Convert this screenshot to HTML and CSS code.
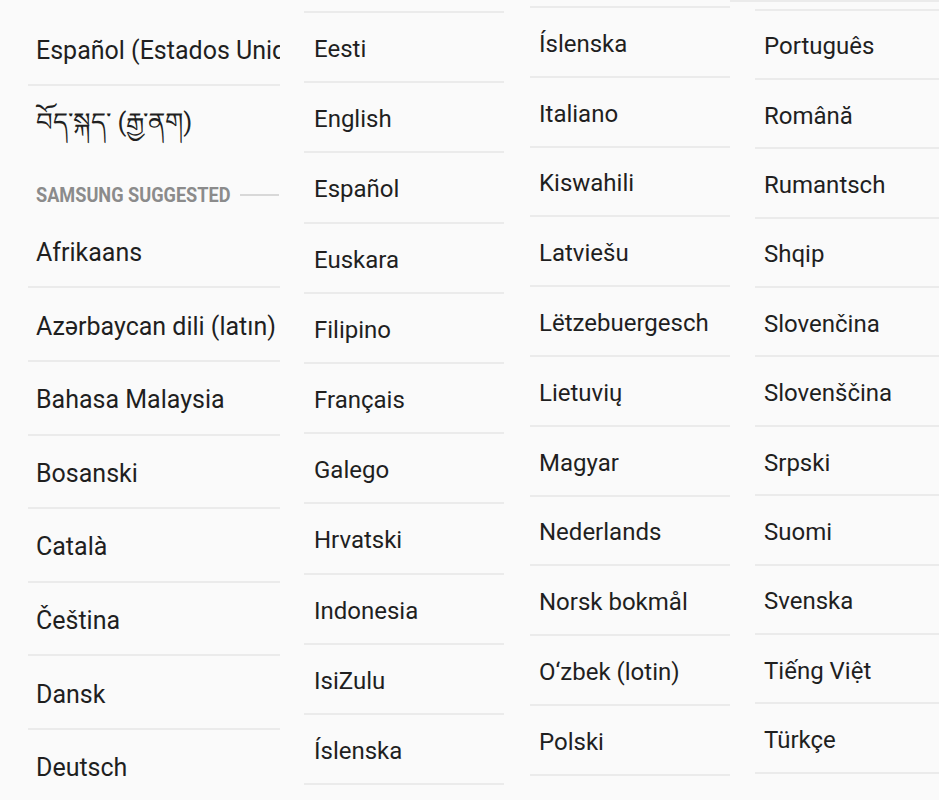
FILE: index.html
```html
<!DOCTYPE html>
<html lang="en">
<head>
<meta charset="utf-8">
<title>Languages</title>
<link rel="stylesheet" href="styles.css">
</head>
<body>
<main class="page">
  <section class="col col1">
    <div class="row line"><span class="clip">Español (Estados Unidos)</span></div>
    <div class="row tib">བོད་སྐད་ (རྒྱ་ནག)</div>
    <div class="header"><span class="header-text">SAMSUNG SUGGESTED</span><span class="header-rule"></span></div>
    <div class="row line">Afrikaans</div>
    <div class="row line">Azərbaycan dili (latın)</div>
    <div class="row line">Bahasa Malaysia</div>
    <div class="row line">Bosanski</div>
    <div class="row line">Català</div>
    <div class="row line">Čeština</div>
    <div class="row line">Dansk</div>
    <div class="row line">Deutsch</div>
  </section>
  <section class="col col2">
    <div class="row line">Eesti</div>
    <div class="row line">English</div>
    <div class="row line">Español</div>
    <div class="row line">Euskara</div>
    <div class="row line">Filipino</div>
    <div class="row line">Français</div>
    <div class="row line">Galego</div>
    <div class="row line">Hrvatski</div>
    <div class="row line">Indonesia</div>
    <div class="row line">IsiZulu</div>
    <div class="row line">Íslenska</div>
  </section>
  <section class="col col3">
    <div class="row line">Íslenska</div>
    <div class="row line">Italiano</div>
    <div class="row line">Kiswahili</div>
    <div class="row line">Latviešu</div>
    <div class="row line">Lëtzebuergesch</div>
    <div class="row line">Lietuvių</div>
    <div class="row line">Magyar</div>
    <div class="row line">Nederlands</div>
    <div class="row line">Norsk bokmål</div>
    <div class="row line">O‘zbek (lotin)</div>
    <div class="row line">Polski</div>
  </section>
  <section class="col4-wrap">
    <div class="col col4">
      <div class="row line">Português</div>
      <div class="row line">Română</div>
      <div class="row line">Rumantsch</div>
      <div class="row line">Shqip</div>
      <div class="row line">Slovenčina</div>
      <div class="row line">Slovenščina</div>
      <div class="row line">Srpski</div>
      <div class="row line">Suomi</div>
      <div class="row line">Svenska</div>
      <div class="row line">Tiếng Việt</div>
      <div class="row line">Türkçe</div>
    </div>
  </section>
</main>
</body>
</html>
```
FILE: styles.css
```css
html, body {
  margin: 0;
  padding: 0;
  background: #fafafa;
  height: 800px;
  overflow: hidden;
}

.page {
  display: flex;
  align-items: flex-start;
  padding-left: 28px;
  height: 800px;
  overflow: hidden;
  font-family: Roboto, "Noto Sans", "DejaVu Sans", sans-serif;
  color: #1f1f1f;
}

.col {
  display: flex;
  flex-direction: column;
  flex: none;
}

.row {
  display: flex;
  align-items: center;
  box-sizing: border-box;
  white-space: nowrap;
  overflow: hidden;
  padding-top: 4px;
}

.clip {
  display: block;
  overflow: hidden;
  max-width: 100%;
}

.line {
  border-bottom: 2px solid #ebebeb;
}

/* column 1 */
.col1 {
  width: 252px;
  margin-top: 12.4px;
  margin-right: 24px;
  font-size: 25px;
}
.col1 .row {
  height: 73.6px;
  padding-left: 8px;
}
.col1 .tib {
  font-size: 26px;
  padding-top: 14px;
}
.header {
  display: flex;
  align-items: center;
  box-sizing: border-box;
  height: 55.2px;
  padding: 16px 1px 0 8px;
}
.header-text {
  display: inline-block;
  font-size: 20.5px;
  font-weight: 700;
  color: #8b8b8b;
  white-space: nowrap;
  transform: scaleX(0.885);
  transform-origin: left center;
  margin-right: -16px;
}
.header-rule {
  flex: 1;
  height: 2px;
  background: #d8d8d8;
}

/* column 2 */
.col2 {
  width: 200px;
  margin-top: 11px;
  margin-right: 26px;
  border-top: 2px solid #ebebeb;
  font-size: 24px;
}
.col2 .row {
  height: 70.2px;
  padding-left: 10px;
}

/* column 3 */
.col3 {
  width: 200px;
  margin-top: 6px;
  border-top: 2px solid #ebebeb;
  font-size: 24px;
}
.col3 .row {
  height: 69.8px;
  padding-left: 9px;
}

/* column 4 */
.col4-wrap {
  flex: 1;
  min-width: 0;
  border-top: 2px solid #ebebeb;
  padding-left: 25px;
}
.col4 {
  margin-top: 6.5px;
  border-top: 2px solid #ebebeb;
  font-size: 24px;
}
.col4 .row {
  height: 69.4px;
  padding-left: 9px;
}
```
